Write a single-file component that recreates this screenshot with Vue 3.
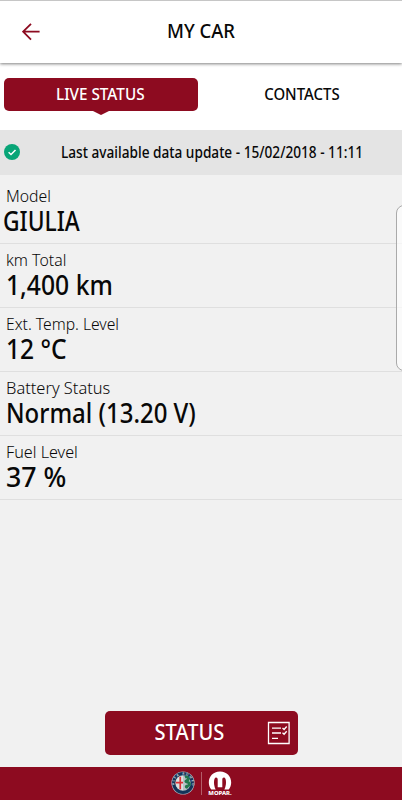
<template>
  <div class="app">
    <header class="header">
      <svg class="back" viewBox="0 0 18 18">
        <path d="M17.6 8.7H1.2M9 .8L1.1 8.7 9 16.6" />
      </svg>
      <h1><span v-fit="68">MY CAR</span></h1>
    </header>

    <nav class="tabs">
      <button class="tab active"><span v-fit="89">LIVE STATUS</span></button>
      <button class="tab"><span v-fit="75.5">CONTACTS</span></button>
    </nav>

    <div class="update">
      <svg class="check" viewBox="0 0 16 16">
        <circle cx="8" cy="8" r="8" />
        <path d="M4.6 8.2l2.4 2.3 4.5-4.6" />
      </svg>
      <p><span v-fit="302">Last available data update - 15/02/2018 - 11:11</span></p>
    </div>

    <main class="content">
      <section class="row" v-for="item in items" :key="item.label">
        <div class="label"><span v-fit="item.labelWidth">{{ item.label }}</span></div>
        <div class="value" :class="{ name: item.name }">
          <span v-fit="item.valueWidth">{{ item.value }}</span>
        </div>
      </section>
      <div class="drawer"></div>
    </main>

    <div class="actions">
      <button class="status">
        <span v-fit="70">STATUS</span>
        <svg class="list" viewBox="0 0 24 24">
          <path d="M1.5 1.5h20.6v21H1.5z" />
          <path d="M5 7.2h9M5 12h9M5 17.3h6M15.5 7l1.6 1.5 2.6-3M15.5 11.8l1.6 1.5 2.6-3" />
        </svg>
      </button>
    </div>

    <footer class="footer">
      <svg class="alfa" viewBox="0 0 24 24">
        <defs>
          <path id="ring" d="M3.2 14A8.9 8.9 0 1 1 20.8 14" />
        </defs>
        <circle cx="12" cy="12" r="11.6" fill="#a9b3be" />
        <circle cx="12" cy="12" r="10.9" fill="#143459" />
        <circle cx="12" cy="12" r="7.7" fill="#b8c2c6" />
        <path d="M12 4.7a7.3 7.3 0 0 0 0 14.6z" fill="#dce1df" />
        <path d="M8.4 5.7h1.7v5.1H12v1.8h-1.9v5.7H8.4v-5.7H4.7v-1.8h3.7z" fill="#dd3036" />
        <path
          d="M14 6.2c2-.8 4 .5 3.3 2.2-.5 1.2-2.7 1-2.5 2 .3 1.1 3.7.4 3.7 2.8 0 2-3.6 1.3-3.4 2.5.1.8 1.4.5 2 1"
          fill="none"
          stroke="#23794d"
          stroke-width="2.8"
        />
        <text class="ring-text">
          <textPath href="#ring" textLength="31">ALFA ROMEO</textPath>
        </text>
      </svg>
      <i class="divider"></i>
      <svg class="mopar" viewBox="0 0 24 24">
        <path
          d="M3.3 18.6C-2.2 11.5 1.8.6 12 .6s14.2 10.9 8.7 18h-4.4c1.7-3.4 2.1-7.4 1.3-10.3-.7-2.5-3.3-2.2-3.3.3v7.6H9.7V8.6c0-2.5-2.6-2.8-3.3-.3-.8 2.9-.4 6.9 1.3 10.3z"
          fill="#fff"
        />
        <text x=".3" y="23.6" textLength="23.4" lengthAdjust="spacingAndGlyphs">MOPAR.</text>
      </svg>
    </footer>
  </div>
</template>

<script setup>
const items = [
  { label: 'Model', value: 'GIULIA', labelWidth: 45, valueWidth: 77, name: true },
  { label: 'km Total', value: '1,400 km', labelWidth: 60.5, valueWidth: 107 },
  { label: 'Ext. Temp. Level', value: '12 °C', labelWidth: 113, valueWidth: 61 },
  { label: 'Battery Status', value: 'Normal (13.20 V)', labelWidth: 104.5, valueWidth: 190 },
  { label: 'Fuel Level', value: '37 %', labelWidth: 71.5, valueWidth: 60.5 }
]

// Condense a text horizontally to the given width
const vFit = {
  mounted(el, { value }) {
    const natural = el.offsetWidth
    el.style.transform = `scaleX(${value / natural})`
  }
}
</script>

<style>
body {
  background: #f1f1f1;
}
</style>

<style scoped>
.app {
  display: flex;
  flex-direction: column;
  height: 800px;
  overflow: hidden;
  background: #f1f1f1;
  color: #080808;
  font-family: 'Noto Sans', sans-serif;
}

span {
  display: inline-block;
  white-space: nowrap;
}

button {
  border: 0;
  padding: 0;
  background: none;
  color: inherit;
  font-family: inherit;
}

.header {
  display: grid;
  grid-template-columns: 62px 1fr 62px;
  align-items: center;
  flex: none;
  height: 63px;
  box-sizing: border-box;
  border-top: 1px solid #c6c6c6;
  background: #fff;
  box-shadow: 0 1px 3px rgba(0, 0, 0, 0.5);
  z-index: 1;
}

.back {
  width: 18px;
  height: 18px;
  margin-left: 22px;
  fill: none;
  stroke: #8d0b20;
  stroke-width: 1.8;
}

h1 {
  margin: 0;
  padding-bottom: 2px;
  text-align: center;
  font-size: 19px;
  font-weight: 500;
  line-height: 26px;
}

.tabs {
  display: grid;
  grid-template-columns: 194px 194px;
  column-gap: 7px;
  flex: none;
  height: 67px;
  box-sizing: border-box;
  padding: 15px 3px 0 3.5px;
  background: #fff;
}

.tab {
  height: 33px;
  font-size: 17px;
  font-weight: 500;
  line-height: 31px;
}

.tab span {
  position: relative;
  top: -1px;
}

.tab.active {
  position: relative;
  border-radius: 5px;
  background: #8d0b20;
  color: #fff;
}

.tab.active::after {
  content: '';
  position: absolute;
  left: 89px;
  top: 33px;
  border: 8px solid transparent;
  border-top: 4px solid #8d0b20;
  border-bottom: 0;
}

.update {
  display: grid;
  grid-template-columns: 20px 1fr;
  align-items: center;
  flex: none;
  height: 45px;
  box-sizing: border-box;
  padding: 0 0 1px 4px;
  background: #e4e4e4;
}

.check {
  width: 16px;
  height: 16px;
  fill: #08a577;
}

.check path {
  fill: none;
  stroke: #fff;
  stroke-width: 1.5;
}

.update p {
  margin: 0;
  padding: 0 0 1px 36.5px;
  font-size: 15.5px;
  font-weight: 500;
  line-height: 22px;
}

.content {
  position: relative;
  flex: 1;
  padding-top: 5px;
}

.row {
  height: 64px;
  box-sizing: border-box;
  padding: 6px 0 0 5.5px;
  border-bottom: 1px solid #dfdfdf;
}

.label {
  height: 20px;
  font-size: 16.5px;
  font-weight: 300;
  line-height: 20px;
}

.value {
  font-size: 27px;
  font-weight: 500;
  line-height: 30px;
}

.value.name {
  margin-left: -3px;
}

.label span,
.value span,
.update span {
  transform-origin: left center;
}

/* edge drawer handle sticking in from the right */
.drawer {
  position: absolute;
  right: -5px;
  top: 30px;
  width: 11px;
  height: 166px;
  box-sizing: border-box;
  border: 1px solid #aaa;
  border-radius: 8px 0 0 8px;
  background: rgba(255, 255, 255, 0.65);
}

.actions {
  flex: none;
  padding: 0 104.5px 12px;
}

.status {
  display: grid;
  grid-template-columns: 1fr 24px;
  align-items: center;
  width: 193px;
  height: 44px;
  padding: 0 7px 0 0;
  border-radius: 5px;
  background: #8d0b20;
  color: #fff;
  font-size: 21.5px;
  font-weight: 500;
  line-height: 42px;
}

.status span {
  justify-self: center;
  margin: -2px 0 0 8px;
}

.list {
  width: 24px;
  height: 24px;
  fill: none;
  stroke: #fff;
  stroke-width: 1.3;
}

.footer {
  display: flex;
  justify-content: center;
  align-items: center;
  flex: none;
  height: 33px;
  box-sizing: border-box;
  padding-bottom: 1px;
  background: #8d0b20;
}

.alfa,
.mopar {
  width: 24px;
  height: 24px;
}

.divider {
  width: 1px;
  height: 23px;
  margin: 0 6px;
  background: #b45d69;
}

.mopar text {
  fill: #fff;
  font-size: 4.6px;
  font-weight: 800;
}

.ring-text {
  fill: #c5ced5;
  font-size: 3.2px;
  font-weight: 700;
}
</style>
